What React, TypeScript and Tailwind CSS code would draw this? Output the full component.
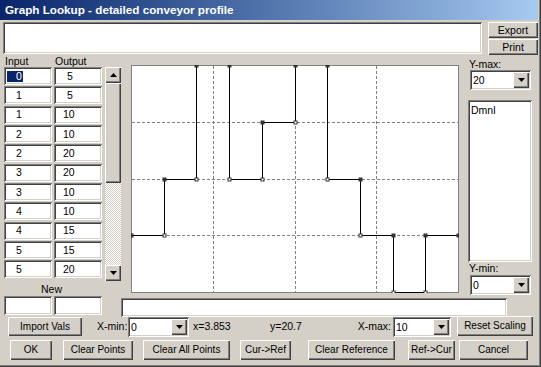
import React from "react";

const sunken =
  "bg-white shadow-[inset_1px_1px_#808080,inset_-1px_-1px_#ffffff,inset_2px_2px_#404040,inset_-2px_-2px_#d4d0c8]";
const raised =
  "bg-[#d4d0c8] shadow-[inset_1px_1px_#ffffff,inset_-1px_-1px_#404040,inset_-2px_-2px_#808080] flex items-center justify-center whitespace-nowrap";

const rows: [string, string][] = [
  ["0", "5"],
  ["1", "5"],
  ["1", "10"],
  ["2", "10"],
  ["2", "20"],
  ["3", "20"],
  ["3", "10"],
  ["4", "10"],
  ["4", "15"],
  ["5", "15"],
  ["5", "20"],
];

// x, y, filled marker
const pts: [number, number, boolean][] = [
  [0, 5, true], [1, 5, false], [1, 10, true], [2, 10, false], [2, 20, true],
  [3, 20, true], [3, 10, false], [4, 10, false], [4, 15, true], [5, 15, false],
  [5, 20, true], [6, 20, true], [6, 10, false], [7, 10, true], [7, 5, false],
  [8, 5, true], [8, 0, false], [9, 0, false], [9, 5, true], [10, 5, true],
];

const px = (x: number) => Math.round(x * 32.7) + 0.5;
const py = (y: number) => Math.round(227 - y * 11.35) + 0.5;

function Tri({ up }: { up?: boolean }) {
  return (
    <svg width="7" height="4" viewBox="0 0 7 4">
      <polygon points={up ? "0,4 7,4 3.5,0" : "0,0 7,0 3.5,4"} fill="#000" />
    </svg>
  );
}

function Combo({ value, className }: { value: string; className: string }) {
  return (
    <div className={`${sunken} ${className} flex p-[2px]`}>
      <span className="flex-1 pl-[1px] flex items-center">{value}</span>
      <div className={`${raised} w-[16px]`}>
        <Tri />
      </div>
    </div>
  );
}

function Graph() {
  const segs = pts.slice(1).map((p, i) => [pts[i], p] as const).filter(([a, b]) => !(a[1] === 20 && b[1] === 20));
  return (
    <svg width="328" height="228" className="ml-[10px] mt-[10px] shrink-0 bg-white">
      <rect x="0.5" y="0.5" width="327" height="227" fill="white" stroke="#808080" />
      {[2.5, 5, 7.5].map((v) => (
        <line key={"v" + v} x1={px(v)} x2={px(v)} y1="1" y2="227" stroke="#808080" strokeDasharray="3 2" />
      ))}
      {[5, 10, 15].map((v) => (
        <line key={"h" + v} y1={py(v)} y2={py(v)} x1="1" x2="327" stroke="#808080" strokeDasharray="3 2" />
      ))}
      {segs.map(([a, b], i) => (
        <line key={"s" + i} x1={px(a[0])} y1={py(a[1])} x2={px(b[0])} y2={py(b[1])} stroke="#000" />
      ))}
      {pts.map((p, i) =>
        p[2] ? (
          <rect key={i} x={px(p[0]) - 2} y={py(p[1]) - 2} width="4" height="4" fill="#333" />
        ) : (
          <rect key={i} x={px(p[0]) - 1.5} y={py(p[1]) - 1.5} width="3" height="3" fill="#fff" stroke="#333" />
        )
      )}
    </svg>
  );
}

export default function App() {
  return (
    <div className="w-[541px] h-[367px] bg-[#d4d0c8] flex flex-col overflow-hidden font-['Liberation_Sans',Arial,sans-serif] text-[10.5px] leading-none text-black shadow-[inset_-1px_-1px_#404040,inset_-2px_-2px_#808080]">
      <div className="h-[20px] mr-[3px] shrink-0 bg-linear-to-r from-[#0a246a] to-[#a6caf0] text-white font-bold text-[11.7px] pl-[5px] flex items-center">
        Graph Lookup - detailed conveyor profile
      </div>

      {/* description + export/print */}
      <div className="flex mt-[2px] h-[33px] shrink-0">
        <div className={`${sunken} ml-[3px] w-[479px] h-[32px]`} />
        <div className="ml-[6px] flex flex-col gap-[1px] w-[50px]">
          <div className={`${raised} h-[17px]`}>Export</div>
          <div className={`${raised} h-[17px]`}>Print</div>
        </div>
      </div>

      {/* main area */}
      <div className="flex h-[262px] shrink-0">
        <div className="ml-[4px] w-[98px] flex flex-col">
          <div className="h-[12px] flex items-center">
            <span className="w-[50px] pl-[1px]">Input</span>
            <span className="pl-[1px]">Output</span>
          </div>
          <div className="grid grid-cols-[48px_48px] gap-x-[2px] grid-rows-[repeat(11,18px)] gap-y-[1.33px]">
            {rows.map(([a, b], i) => (
              <React.Fragment key={i}>
                <div className={`${sunken} flex items-center`}>
                  {i === 0 ? (
                    <span className="ml-[3px] pl-[9px] pr-[1px] h-[11px] bg-[#0a246a] text-white flex items-center">{a}</span>
                  ) : (
                    <span className="pl-[12px]">{a}</span>
                  )}
                </div>
                <div className={`${sunken} flex items-center`}>
                  <span className={b.length === 1 ? "pl-[13px]" : "pl-[9px]"}>{b}</span>
                </div>
              </React.Fragment>
            ))}
          </div>
          <div className="mt-[5px] h-[12px] pl-[37px] flex items-center">New</div>
          <div className="flex gap-[2px] mt-[1px]">
            <div className={`${sunken} w-[48px] h-[19px]`} />
            <div className={`${sunken} w-[48px] h-[19px]`} />
          </div>
        </div>

        {/* scrollbar */}
        <div className="ml-[3px] mt-[12px] w-[16px] h-[214px] flex flex-col">
          <div className={`${raised} h-[16px]`}>
            <Tri up />
          </div>
          <div className={`${raised} h-[100px]`} />
          <div className="flex-1 bg-[repeating-conic-gradient(#ffffff_0_25%,#d4d0c8_0_50%)] bg-size-[2px_2px]" />
          <div className={`${raised} h-[16px]`}>
            <Tri />
          </div>
        </div>

        {/* graph + right panel + status */}
        <div className="flex flex-col">
          <div className="flex h-[241px]">
            <Graph />
            <div className="ml-[9px] mt-[4px] w-[64px] flex flex-col">
              <div className="h-[11px] pl-[1px] flex items-center">Y-max:</div>
              <Combo value="20" className="ml-[2px] w-[61px] h-[20px]" />
              <div className={`${sunken} mt-[10px] h-[162px] pl-[3px] pt-[5px]`}>Dmnl</div>
              <div className="h-[12px] pl-[1px] flex items-center">Y-min:</div>
              <Combo value="0" className="ml-[2px] mt-[1px] w-[61px] h-[20px]" />
            </div>
          </div>
          <div className={`${sunken} mt-[2px] w-[386px] h-[19px]`} />
        </div>
      </div>

      {/* scaling row */}
      <div className="flex items-start h-[19px] shrink-0">
        <div className={`${raised} ml-[8px] w-[74px] h-[19px] text-[10px]`}>Import Vals</div>
        <div className="ml-[15px] w-[31px] h-[19px] flex items-center whitespace-nowrap">X-min:</div>
        <Combo value="0" className="w-[61px] h-[20px]" />
        <div className="ml-[4px] w-[77px] h-[19px] flex items-center">x=3.853</div>
        <div className="w-[86px] h-[19px] flex items-center">y=20.7</div>
        <div className="w-[36px] h-[19px] flex items-center justify-end pr-[1px] whitespace-nowrap">X-max:</div>
        <Combo value="10" className="ml-[1px] w-[58px] h-[20px]" />
        <div className={`${raised} ml-[6px] -mt-[1px] w-[76px] h-[20px] text-[10px]`}>Reset Scaling</div>
      </div>

      {/* bottom buttons */}
      <div className="flex mt-[4px] h-[20px] shrink-0 text-[10px]">
        <div className={`${raised} ml-[10px] w-[42px]`}>OK</div>
        <div className={`${raised} ml-[11px] w-[70px]`}>Clear Points</div>
        <div className={`${raised} ml-[10px] w-[87px]`}>Clear All Points</div>
        <div className={`${raised} ml-[10px] w-[51px]`}>Cur-&gt;Ref</div>
        <div className={`${raised} ml-[17px] w-[87px]`}>Clear Reference</div>
        <div className={`${raised} ml-[13px] w-[47px]`}>Ref-&gt;Cur</div>
        <div className={`${raised} ml-[4px] w-[69px]`}>Cancel</div>
      </div>
    </div>
  );
}
